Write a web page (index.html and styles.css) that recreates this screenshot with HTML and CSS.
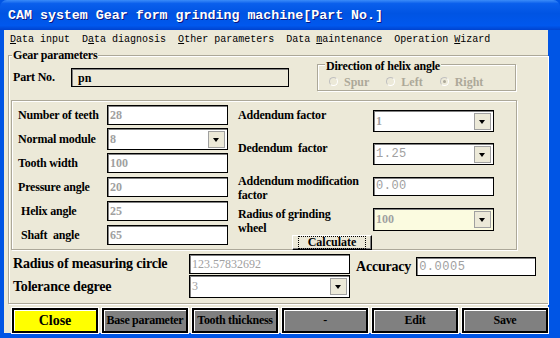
FILE: index.html
```html
<!DOCTYPE html>
<html lang="en">
  <head>
    <meta charset="UTF-8" />
    <title>CAM system Gear form grinding machine</title>
    <link rel="stylesheet" href="styles.css">
  </head>
  <body>
    <div class="window">
      <div class="titlebar">CAM system Gear form grinding machine[Part No.]</div>

      <div class="menubar">
        <span><u>D</u>ata input</span>
        <span>D<u>a</u>ta diagnosis</span>
        <span><u>O</u>ther parameters</span>
        <span>Data <u>m</u>aintenance</span>
        <span>Operation <u>W</u>izard</span>
      </div>

      <div class="client">
        <!-- 기어 파라미터 그룹 -->
        <div class="group gear">
          <span class="group-title">Gear parameters</span>

          <div class="top-row">
            <div class="part">
              <span class="lbl">Part No.</span>
              <div class="box part-box">pn</div>
            </div>
            <div class="group helix">
              <span class="group-title">Direction of helix angle</span>
              <label class="radio"><i></i>Spur</label>
              <label class="radio"><i></i>Left</label>
              <label class="radio"><i class="on"></i>Right</label>
            </div>
          </div>

          <div class="group inner">
            <div class="col left">
              <div class="row"><span class="lbl">Number of teeth</span><div class="box">28</div></div>
              <div class="row"><span class="lbl">Normal module</span><div class="box combo">8<b class="arrow"></b></div></div>
              <div class="row"><span class="lbl">Tooth width</span><div class="box">100</div></div>
              <div class="row"><span class="lbl">Pressure angle</span><div class="box">20</div></div>
              <div class="row"><span class="lbl ind">Helix angle</span><div class="box">25</div></div>
              <div class="row"><span class="lbl ind">Shaft&nbsp; angle</span><div class="box">65</div></div>
            </div>
            <div class="col right">
              <div class="row"><span class="lbl">Addendum factor</span><div class="box combo">1<b class="arrow"></b></div></div>
              <div class="row"><span class="lbl">Dedendum&nbsp; factor</span><div class="box combo mono">1.25<b class="arrow"></b></div></div>
              <div class="row"><span class="lbl">Addendum modification<br>factor</span><div class="box mono short">0.00</div></div>
              <div class="row"><span class="lbl">Radius of grinding<br>wheel</span><div class="box combo yellow">100<b class="arrow"></b></div></div>
              <div class="calc-row"><button class="calc"><span>Calculate</span></button></div>
            </div>
          </div>

          <div class="wide-row measure">
            <span class="lbl big">Radius of measuring circle</span>
            <div class="box wide">123.57832692</div>
            <span class="lbl big acc">Accuracy</span>
            <div class="box mono acc-box">0.0005</div>
          </div>
          <div class="wide-row">
            <span class="lbl big">Tolerance degree</span>
            <div class="box combo wide tall">3<b class="arrow"></b></div>
          </div>
        </div>

        <!-- 하단 버튼 -->
        <div class="buttons">
          <button class="btn close">Close</button>
          <button class="btn">Base parameter</button>
          <button class="btn">Tooth thickness</button>
          <button class="btn">-</button>
          <button class="btn">Edit</button>
          <button class="btn">Save</button>
        </div>
      </div>
    </div>
  </body>
</html>
```

FILE: styles.css
```css
body {
  margin: 0;
  width: 560px;
  height: 338px;
  overflow: hidden;
  background: #0054e3;
  font-family: "Liberation Serif", serif;
}

.window {
  display: flex;
  flex-direction: column;
  height: 338px;
  background: #0055e5;
  border-radius: 7px 7px 0 0;
  overflow: hidden;
}

.titlebar {
  height: 30px;
  line-height: 31px;
  padding-left: 8px;
  background: linear-gradient(#3b8cf8 0%, #0a5fec 12%, #0054e3 45%, #0058ee 85%, #0043cf 100%);
  color: #fff;
  font-family: "Liberation Mono", monospace;
  font-size: 13.3px;
  font-weight: 700;
  text-shadow: 1px 1px #0a1883;
  white-space: nowrap;
}

.menubar {
  height: 20px;
  line-height: 19px;
  margin: 0 12px 0 4px;
  padding-left: 6px;
  background: #ece9d8;
  font-family: "Liberation Mono", monospace;
  font-size: 10px;
  white-space: nowrap;
}

.menubar span {
  margin-right: 6px;
}

.client {
  flex: 1;
  margin: 0 12px 5px 4px;
  background: #ece9d8;
  display: flex;
  flex-direction: column;
}

/* 그룹 박스 */
.group {
  position: relative;
  border: 1px solid #aca899;
  box-shadow: inset 1px 1px #fff, 1px 1px #fff;
}

.group-title {
  position: absolute;
  top: -7px;
  left: 3px;
  padding: 0 1px;
  background: #ece9d8;
  font-size: 12px;
  font-weight: 700;
  line-height: 12px;
  letter-spacing: -0.2px;
}

.gear {
  margin: 5px 0 0 4px;
  padding: 0 0 0 2px;
  height: 247px;
  border-right: none;
}

.lbl {
  font-size: 12px;
  font-weight: 700;
  letter-spacing: -0.2px;
  white-space: nowrap;
}

.top-row {
  display: flex;
  align-items: center;
  height: 26px;
  margin-top: 8px;
}

.part {
  display: flex;
  align-items: center;
  padding-left: 2px;
}

.part .lbl {
  width: 58px;
}

.box {
  position: relative;
  box-sizing: border-box;
  width: 121px;
  height: 20px;
  border: 1px solid #000;
  box-shadow: inset 1px 1px #808080;
  background: #fff;
  color: #a0a0a0;
  font-size: 12px;
  font-weight: 700;
  line-height: 18px;
  padding-left: 2px;
}

.part-box {
  width: 218px;
  height: 19px;
  background: #ece9d8;
  color: #000;
  padding-left: 6px;
}

.mono {
  font-family: "Liberation Mono", monospace;
  font-weight: 400;
  letter-spacing: 0.5px;
}

.combo {
  height: 22px;
  line-height: 20px;
}

.arrow {
  position: absolute;
  top: 2px;
  right: 2px;
  width: 15px;
  height: 15px;
  border: 1px solid #a0a0a0;
  background: #ece9d8;
}

.arrow::after {
  content: "";
  position: absolute;
  left: 4px;
  top: 6px;
  border-left: 3.5px solid transparent;
  border-right: 3.5px solid transparent;
  border-top: 4px solid #000;
}

.yellow {
  background: #fbfbe0;
  height: 23px;
}

.helix {
  margin-left: 28px;
  width: 199px;
  height: 27px;
  display: flex;
  align-items: flex-end;
  box-sizing: border-box;
  padding: 0 0 2px 11px;
  gap: 17px;
}

.helix .group-title {
  top: -5px;
  left: 7px;
}

.radio {
  display: flex;
  align-items: center;
  gap: 6px;
  color: #aca899;
  font-size: 12px;
  font-weight: 700;
  line-height: 12px;
}

.radio i {
  box-sizing: border-box;
  width: 9px;
  height: 9px;
  border-radius: 50%;
  border: 1px solid #c0c0c0;
  border-right-color: #fff;
  border-bottom-color: #fff;
  position: relative;
}

.radio i.on::after {
  content: "";
  position: absolute;
  left: 2px;
  top: 2px;
  width: 3px;
  height: 3px;
  border-radius: 50%;
  background: #aca899;
}

/* 입력 영역 */
.inner {
  margin: 10px 0 0 0;
  width: 506px;
  height: 150px;
  box-sizing: border-box;
  display: flex;
  padding-left: 6px;
}

.col.left {
  width: 210px;
  padding-top: 2px;
}

.col.left .lbl {
  width: 89px;
}

.col.left .ind {
  width: 86px;
  padding-left: 3px;
}

.row {
  display: flex;
  align-items: center;
  height: 24px;
}

.col.right {
  margin-left: 10px;
  padding-top: 3px;
}

.col.right .row {
  height: 33px;
}

.col.right .lbl {
  align-self: flex-start;
  margin: 4px 10px 0 0;
  width: 125px;
  line-height: 14px;
}

.short {
  height: 19px;
  line-height: 17px;
}

.calc-row {
  margin: -4px 0 0 54px;
}

.calc {
  width: 80px;
  height: 15px;
  padding: 0;
  border: 1px solid #000;
  border-top-color: #fff;
  border-left-color: #fff;
  box-shadow: inset -1px -1px #808080;
  background: #ece9d8;
  font-family: "Liberation Serif", serif;
  font-size: 12px;
  font-weight: 700;
  line-height: 11px;
}

.calc span {
  display: inline-block;
  outline: 1px dotted #000;
  padding: 0 9px;
}

.wide-row {
  display: flex;
  align-items: center;
  height: 23px;
  padding-left: 2px;
}

.measure {
  margin-top: 2px;
}

.big {
  font-size: 14px;
  width: 176px;
}

.wide {
  width: 161px;
  height: 20px;
  font-weight: 400;
}

.tall {
  height: 23px;
}

.acc {
  width: auto;
  margin: 6px 0 0 6px;
}

.acc-box {
  margin: 6px 0 0 5px;
  width: 120px;
  height: 19px;
}

/* 하단 버튼 */
.buttons {
  display: flex;
  gap: 4px;
  margin: 4px 0 0 8px;
}

.btn {
  width: 87px;
  height: 25px;
  padding: 0;
  border: 2px solid #000;
  box-shadow: inset 1px 1px #fff;
  outline: 1px solid #fff;
  background: #808080;
  font-family: "Liberation Serif", serif;
  font-size: 12px;
  font-weight: 700;
  color: #000;
  white-space: nowrap;
  letter-spacing: -0.3px;
}

.btn.close {
  background: #ffff00;
  font-size: 14px;
  letter-spacing: 0;
}
```
